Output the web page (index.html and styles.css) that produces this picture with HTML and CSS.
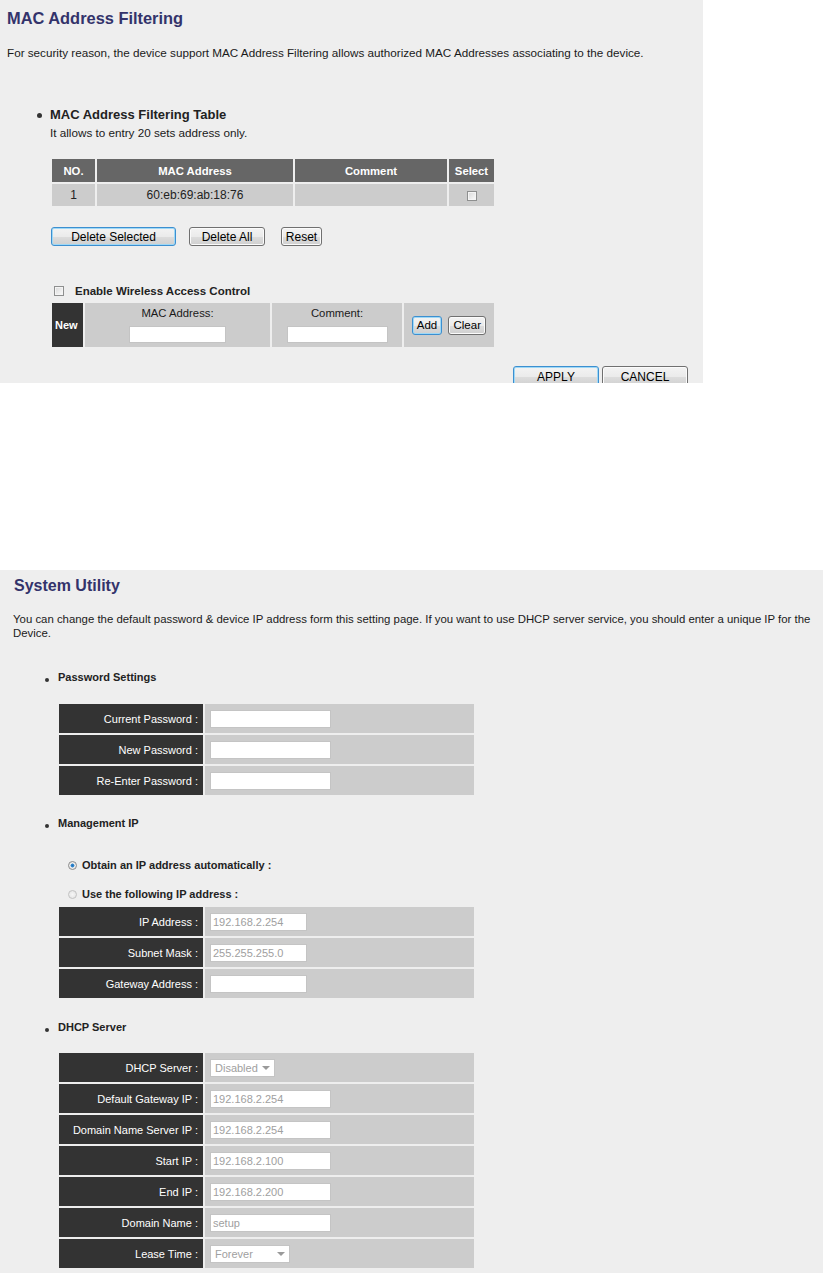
FILE: index.html
```html
<!DOCTYPE html>
<html lang="en">
<head>
  <meta charset="UTF-8" />
  <title>Router Settings</title>
  <link rel="stylesheet" href="styles.css">
</head>
<body>

  <!-- MAC filtering page -->
  <div class="panel mac-panel">
    <h1 class="page-title">MAC Address Filtering</h1>
    <p class="intro">For security reason, the device support MAC Address Filtering allows authorized MAC Addresses associating to the device.</p>

    <div class="section-head big">MAC Address Filtering Table</div>
    <p class="note">It allows to entry 20 sets address only.</p>

    <table class="mac-table">
      <tr class="head-row">
        <th class="c-no">NO.</th>
        <th class="c-mac">MAC Address</th>
        <th class="c-comment">Comment</th>
        <th class="c-select">Select</th>
      </tr>
      <tr class="data-row">
        <td>1</td>
        <td>60:eb:69:ab:18:76</td>
        <td></td>
        <td><span class="check"></span></td>
      </tr>
    </table>

    <div class="btn-row">
      <button class="btn focus del-sel">Delete Selected</button>
      <button class="btn del-all">Delete All</button>
      <button class="btn reset">Reset</button>
    </div>

    <div class="check-line"><span class="check"></span>Enable Wireless Access Control</div>

    <table class="new-table">
      <tr>
        <td class="new-cell">New</td>
        <td class="entry-cell mac-entry">
          <div class="entry-label">MAC Address:</div>
          <input class="field mac-field" type="text">
        </td>
        <td class="entry-cell comment-entry">
          <div class="entry-label">Comment:</div>
          <input class="field comment-field" type="text">
        </td>
        <td class="entry-cell add-cell">
          <button class="btn focus add">Add</button>
          <button class="btn clear">Clear</button>
        </td>
      </tr>
    </table>

    <div class="action-row">
      <button class="btn focus big-btn">APPLY</button>
      <button class="btn big-btn">CANCEL</button>
    </div>
  </div>

  <!-- System utility page -->
  <div class="panel util-panel">
    <h2 class="page-title util-title">System Utility</h2>
    <p class="intro util-intro">You can change the default password &amp; device IP address form this setting page. If you want to use DHCP server service, you should enter a unique IP for the<br>Device.</p>

    <div class="section-head small first-head">Password Settings</div>
    <table class="form-table pass-table">
      <tr><td class="lbl">Current Password :</td><td class="val"><input class="field wide" type="password"></td></tr>
      <tr><td class="lbl">New Password :</td><td class="val"><input class="field wide" type="password"></td></tr>
      <tr><td class="lbl">Re-Enter Password :</td><td class="val"><input class="field wide" type="password"></td></tr>
    </table>

    <div class="section-head small mgmt-head">Management IP</div>
    <div class="radio-line first-radio"><span class="radio on"></span>Obtain an IP address automatically :</div>
    <div class="radio-line second-radio"><span class="radio"></span>Use the following IP address :</div>
    <table class="form-table ip-table">
      <tr><td class="lbl">IP Address :</td><td class="val"><input class="field narrow dim" type="text" value="192.168.2.254"></td></tr>
      <tr><td class="lbl">Subnet Mask :</td><td class="val"><input class="field narrow dim" type="text" value="255.255.255.0"></td></tr>
      <tr><td class="lbl">Gateway Address :</td><td class="val"><input class="field narrow" type="text"></td></tr>
    </table>

    <div class="section-head small dhcp-head">DHCP Server</div>
    <table class="form-table dhcp-table">
      <tr><td class="lbl">DHCP Server :</td><td class="val"><span class="dropdown short">Disabled</span></td></tr>
      <tr><td class="lbl">Default Gateway IP :</td><td class="val"><input class="field wide dim" type="text" value="192.168.2.254"></td></tr>
      <tr><td class="lbl">Domain Name Server IP :</td><td class="val"><input class="field wide dim" type="text" value="192.168.2.254"></td></tr>
      <tr><td class="lbl">Start IP :</td><td class="val"><input class="field wide dim" type="text" value="192.168.2.100"></td></tr>
      <tr><td class="lbl">End IP :</td><td class="val"><input class="field wide dim" type="text" value="192.168.2.200"></td></tr>
      <tr><td class="lbl">Domain Name :</td><td class="val"><input class="field wide dim" type="text" value="setup"></td></tr>
      <tr><td class="lbl">Lease Time :</td><td class="val"><span class="dropdown long">Forever</span></td></tr>
    </table>
  </div>

</body>
</html>
```

FILE: styles.css
```css
body {
  margin: 0;
  background: #ffffff;
  font-family: 'Liberation Sans', Arial, sans-serif;
  font-size: 11px;
  color: #1a1a1a;
}

.panel {
  background: #eeeeee;
  box-sizing: border-box;
}

.mac-panel {
  width: 703px;
  height: 383px;
  overflow: hidden;
  padding: 8px 15px 0 7px;
  font-size: 11.7px;
}

.util-panel {
  margin-top: 187px;
  height: 703px;
  overflow: hidden;
  padding: 6px 4px 0 13px;
}

.page-title {
  margin: 0;
  font-size: 16px;
  line-height: 20px;
  font-weight: bold;
  color: #33336b;
}

.mac-panel .page-title {
  font-size: 16.4px;
}

.util-title {
  margin-left: 1px;
}

.intro {
  margin: 18px 0 0;
  line-height: 14px;
}

.util-intro {
  margin-top: 16px;
  font-size: 11.4px;
}

.note {
  margin: 2px 0 0 43px;
  line-height: 14px;
}

/* bullet headings */
.section-head {
  display: flex;
  align-items: center;
  font-weight: bold;
  color: #222;
}

.section-head.big {
  margin-top: 46px;
  padding-left: 30px;
  font-size: 13px;
  line-height: 18px;
}

.section-head.big::before {
  content: "";
  width: 5px;
  height: 5px;
  border-radius: 50%;
  background: #333;
  margin-right: 8px;
}

.section-head.small {
  padding-left: 32px;
  font-size: 11px;
  line-height: 16px;
}

.section-head.small::before {
  content: "";
  width: 4px;
  height: 4px;
  border-radius: 50%;
  background: #333;
  margin: 6px 9px 0 0;
}

.first-head { margin-top: 29px; }
.mgmt-head { margin-top: 18px; }
.dhcp-head { margin-top: 19px; }

/* mac list table */
.mac-table,
.new-table {
  border-collapse: separate;
  border-spacing: 2px;
  margin-left: 43px;
}

.mac-table {
  margin-top: 17px;
}

.mac-table th,
.mac-table td {
  padding: 0;
  text-align: center;
}

.head-row { height: 23px; }
.data-row { height: 22px; }

.mac-table th {
  background: #666666;
  color: #ffffff;
  font-size: 11.3px;
  font-weight: bold;
}

.mac-table td {
  background: #cccccc;
  color: #222;
  font-size: 12px;
}

.c-no { width: 43px; }
.c-mac { width: 196px; }
.c-comment { width: 152px; }
.c-select { width: 45px; }

.check {
  display: inline-block;
  width: 10px;
  height: 10px;
  box-sizing: border-box;
  border: 1px solid #8e8f8f;
  background: linear-gradient(135deg, #d8d8d8, #fbfbfb);
  box-shadow: inset 0 0 0 1px #f4f4f4;
  vertical-align: middle;
}

/* buttons */
.btn {
  height: 19px;
  padding: 0;
  font-family: 'Liberation Sans', Arial, sans-serif;
  font-size: 12px;
  color: #000;
  border: 1px solid #707070;
  border-radius: 3px;
  background: linear-gradient(#f3f3f3 0%, #ebebeb 50%, #dddddd 51%, #cfcfcf 100%);
  box-shadow: inset 0 0 0 1px #fbfbfb;
}

.btn.focus {
  border-color: #3c8fd0;
  box-shadow: inset 0 0 0 1px #9ed8f6;
}

.btn-row {
  display: flex;
  margin: 19px 0 0 44px;
}

.del-sel { width: 125px; }
.del-all { width: 76px; margin-left: 13px; }
.reset { width: 41px; margin-left: 16px; }

.check-line {
  display: flex;
  align-items: center;
  margin-top: 37px;
  padding-left: 47px;
  line-height: 16px;
  font-size: 11.5px;
  font-weight: bold;
  color: #222;
}

.check-line .check {
  margin-right: 11px;
}

/* new entry row */
.new-table {
  margin-top: 2px;
}

.new-table tr {
  height: 44px;
}

.new-table td {
  padding: 0;
  background: #cccccc;
}

.new-cell {
  width: 31px;
  background: #333333 !important;
  color: #ffffff;
  font-size: 11px;
  font-weight: bold;
  padding-left: 3px !important;
  box-sizing: border-box;
}

.entry-cell {
  text-align: center;
  vertical-align: top;
}

.mac-entry { width: 185px; }
.comment-entry { width: 130px; }

.entry-label {
  margin-top: 4px;
  line-height: 13px;
  font-size: 11.3px;
}

.add-cell {
  width: 90px;
  text-align: left;
  vertical-align: middle;
  padding-left: 8px !important;
  box-sizing: border-box;
}

.add { width: 30px; font-size: 11.5px; }
.clear { width: 38px; margin-left: 3px; font-size: 11.5px; }

.action-row {
  display: flex;
  justify-content: flex-end;
  gap: 3px;
  margin-top: 17px;
}

.big-btn {
  width: 86px;
  height: 21px;
}

/* input fields */
.field {
  box-sizing: border-box;
  height: 17px;
  padding: 0 2px;
  border: 1px solid #c4c4c4;
  background: #ffffff;
  font-family: 'Liberation Sans', Arial, sans-serif;
  font-size: 11px;
  color: #222;
  outline: none;
}

.field.dim {
  color: #a0a0a0;
}

.mac-field {
  width: 97px;
  margin-top: 6px;
}

.comment-field {
  width: 101px;
  margin-top: 6px;
}

.field.wide { width: 121px; height: 18px; }
.field.narrow { width: 97px; height: 18px; }

/* utility tables */
.form-table {
  border-collapse: separate;
  border-spacing: 2px;
  margin-left: 44px;
}

.form-table tr {
  height: 29px;
}

.form-table td {
  padding: 0;
}

.pass-table { margin-top: 17px; }
.ip-table { margin-top: 3px; }
.dhcp-table { margin-top: 16px; }

.lbl {
  width: 144px;
  box-sizing: border-box;
  padding-right: 5px !important;
  text-align: right;
  background: #333333;
  color: #ffffff;
  white-space: nowrap;
}

.val {
  width: 269px;
  box-sizing: border-box;
  padding-left: 5px !important;
  background: #cccccc;
}

.val .field {
  display: block;
}

.radio-line {
  display: flex;
  align-items: center;
  padding-left: 55px;
  line-height: 16px;
  font-weight: bold;
  color: #222;
}

.first-radio { margin-top: 26px; }
.second-radio { margin-top: 13px; }

.radio {
  width: 9px;
  height: 9px;
  box-sizing: border-box;
  border-radius: 50%;
  border: 1px solid #c2c2c2;
  background: radial-gradient(circle, #f6f6f6 0%, #e2e2e2 100%);
  margin-right: 5px;
}

.radio.on {
  border-color: #8a8a8a;
  background: radial-gradient(circle, #1f6fb5 0%, #3a8fd6 35%, #e6e6e6 45%, #f7f7f7 100%);
}

.dropdown {
  display: flex;
  align-items: center;
  justify-content: space-between;
  box-sizing: border-box;
  height: 18px;
  padding: 0 4px 0 4px;
  border: 1px solid #c4c4c4;
  background: #ffffff;
  color: #a0a0a0;
}

.dropdown::after {
  content: "";
  border-left: 4px solid transparent;
  border-right: 4px solid transparent;
  border-top: 4px solid #9a9a9a;
}

.dropdown.short { width: 65px; }
.dropdown.long { width: 80px; }
```
